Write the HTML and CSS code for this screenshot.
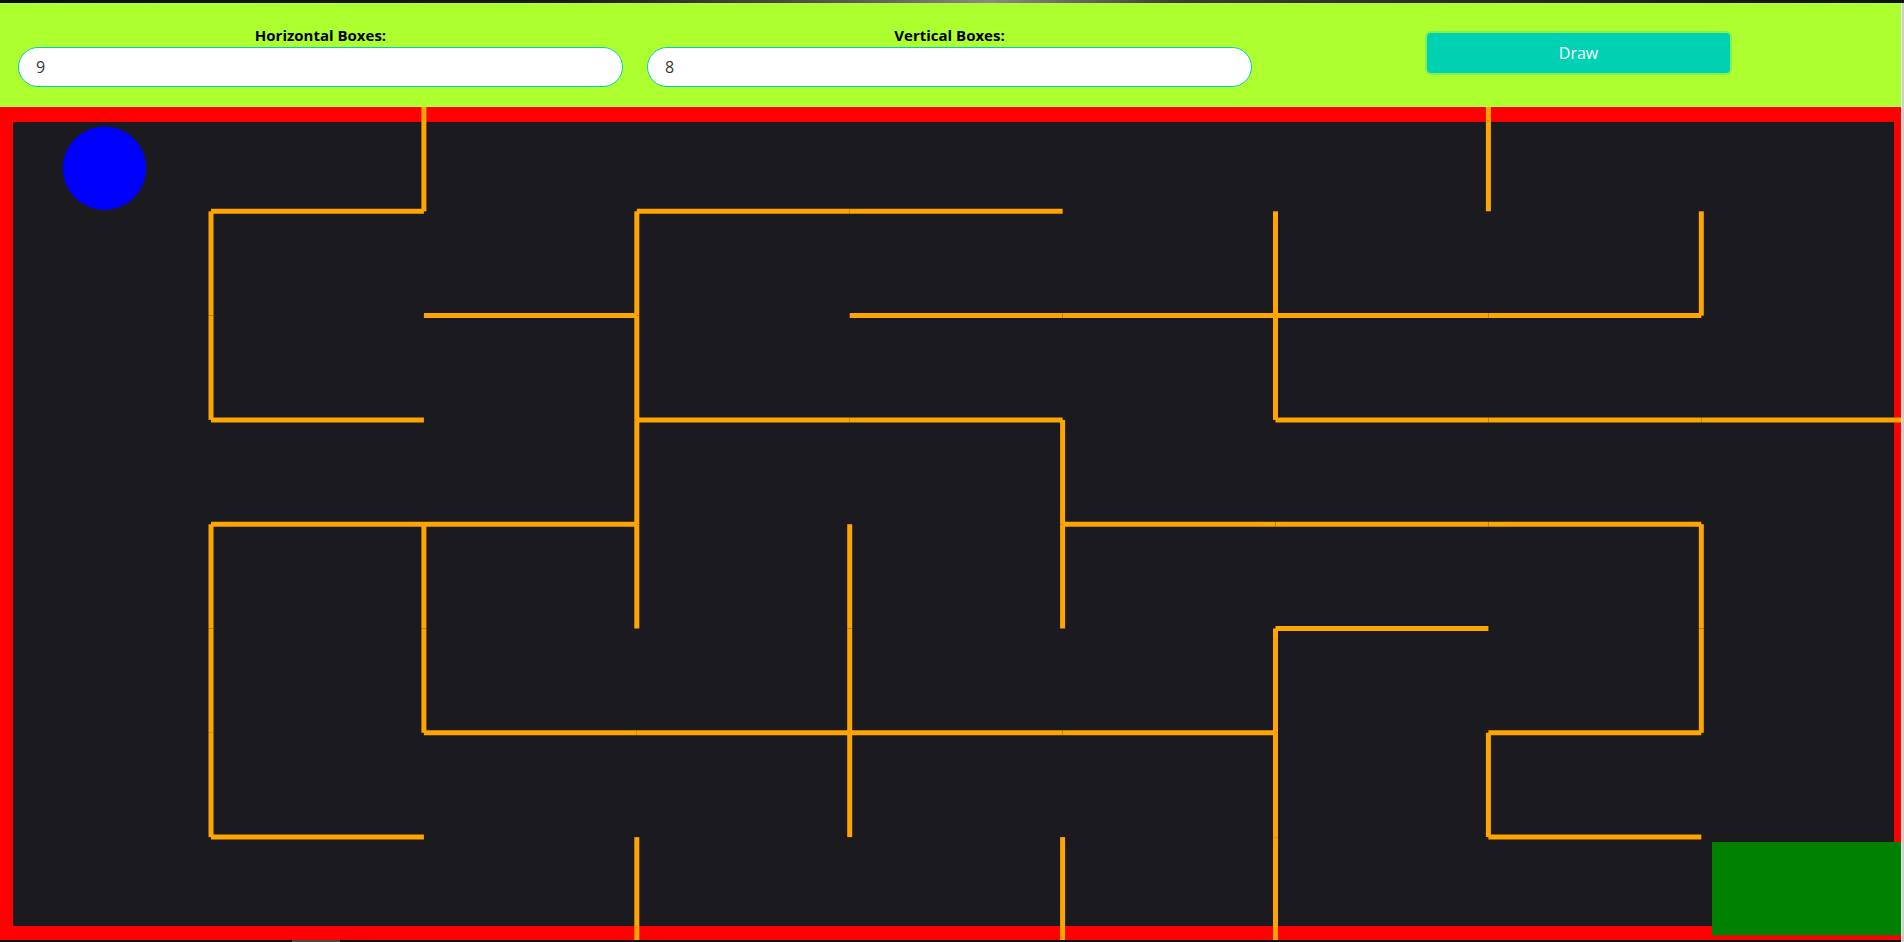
FILE: index.html
```html
<!DOCTYPE html>
<html lang="en">
<head>
<meta charset="utf-8">
<title>Maze</title>
<link rel="stylesheet" href="styles.css">
</head>
<body>
<div class="topstrip"></div>
<div class="frame">
  <div class="page">
    <header class="controls">
      <div class="column">
        <label class="label">Horizontal Boxes:</label>
        <input class="input" type="text" value="9">
      </div>
      <div class="column">
        <label class="label">Vertical Boxes:</label>
        <input class="input" type="text" value="8">
      </div>
      <div class="column column-button">
        <button class="button">Draw</button>
      </div>
    </header>
    <div class="maze-wrap">
      <svg class="maze" width="1901" height="835" viewBox="0 0 1901 835" xmlns="http://www.w3.org/2000/svg">
        <rect class="maze-border" x="0" y="0" width="1901" height="833"/>
        <rect class="maze-floor" x="13" y="15" width="1881" height="804"/>
        <g class="walls">
          <line x1="423.9" y1="0" x2="423.9" y2="104.3"/>
          <line x1="211.0" y1="104.3" x2="211.0" y2="208.6"/>
          <line x1="211.0" y1="208.6" x2="211.0" y2="312.9"/>
          <line x1="636.8" y1="104.3" x2="636.8" y2="208.6"/>
          <line x1="636.8" y1="208.6" x2="636.8" y2="312.9"/>
          <line x1="636.8" y1="312.9" x2="636.8" y2="417.2"/>
          <line x1="636.8" y1="417.2" x2="636.8" y2="521.5"/>
          <line x1="1701.3" y1="104.3" x2="1701.3" y2="208.6"/>
          <line x1="1488.4" y1="0" x2="1488.4" y2="104.3"/>
          <line x1="1275.5" y1="104.3" x2="1275.5" y2="208.6"/>
          <line x1="1275.5" y1="208.6" x2="1275.5" y2="312.9"/>
          <line x1="1062.6" y1="312.9" x2="1062.6" y2="417.2"/>
          <line x1="1062.6" y1="417.2" x2="1062.6" y2="521.5"/>
          <line x1="1701.3" y1="417.2" x2="1701.3" y2="521.5"/>
          <line x1="1701.3" y1="521.5" x2="1701.3" y2="625.8"/>
          <line x1="1488.4" y1="625.8" x2="1488.4" y2="730.1"/>
          <line x1="1275.5" y1="521.5" x2="1275.5" y2="625.8"/>
          <line x1="1275.5" y1="625.8" x2="1275.5" y2="730.1"/>
          <line x1="1275.5" y1="730.1" x2="1275.5" y2="834.4"/>
          <line x1="423.9" y1="417.2" x2="423.9" y2="521.5"/>
          <line x1="423.9" y1="521.5" x2="423.9" y2="625.8"/>
          <line x1="211.0" y1="417.2" x2="211.0" y2="521.5"/>
          <line x1="211.0" y1="521.5" x2="211.0" y2="625.8"/>
          <line x1="211.0" y1="625.8" x2="211.0" y2="730.1"/>
          <line x1="849.7" y1="417.2" x2="849.7" y2="521.5"/>
          <line x1="849.7" y1="521.5" x2="849.7" y2="625.8"/>
          <line x1="849.7" y1="625.8" x2="849.7" y2="730.1"/>
          <line x1="636.8" y1="730.1" x2="636.8" y2="834.4"/>
          <line x1="1062.6" y1="730.1" x2="1062.6" y2="834.4"/>

          <line x1="211.0" y1="104.3" x2="423.9" y2="104.3"/>
          <line x1="211.0" y1="312.9" x2="423.9" y2="312.9"/>
          <line x1="423.9" y1="208.6" x2="636.8" y2="208.6"/>
          <line x1="636.8" y1="104.3" x2="849.7" y2="104.3"/>
          <line x1="849.7" y1="104.3" x2="1062.6" y2="104.3"/>
          <line x1="849.7" y1="208.6" x2="1062.6" y2="208.6"/>
          <line x1="1062.6" y1="208.6" x2="1275.5" y2="208.6"/>
          <line x1="1275.5" y1="208.6" x2="1488.4" y2="208.6"/>
          <line x1="1488.4" y1="208.6" x2="1701.3" y2="208.6"/>
          <line x1="1275.5" y1="312.9" x2="1488.4" y2="312.9"/>
          <line x1="1488.4" y1="312.9" x2="1701.3" y2="312.9"/>
          <line x1="1701.3" y1="312.9" x2="1914.2" y2="312.9"/>
          <line x1="636.8" y1="312.9" x2="849.7" y2="312.9"/>
          <line x1="849.7" y1="312.9" x2="1062.6" y2="312.9"/>
          <line x1="1062.6" y1="417.2" x2="1275.5" y2="417.2"/>
          <line x1="1275.5" y1="417.2" x2="1488.4" y2="417.2"/>
          <line x1="1488.4" y1="417.2" x2="1701.3" y2="417.2"/>
          <line x1="1488.4" y1="625.8" x2="1701.3" y2="625.8"/>
          <line x1="1488.4" y1="730.1" x2="1701.3" y2="730.1"/>
          <line x1="1275.5" y1="521.5" x2="1488.4" y2="521.5"/>
          <line x1="423.9" y1="625.8" x2="636.8" y2="625.8"/>
          <line x1="636.8" y1="625.8" x2="849.7" y2="625.8"/>
          <line x1="849.7" y1="625.8" x2="1062.6" y2="625.8"/>
          <line x1="1062.6" y1="625.8" x2="1275.5" y2="625.8"/>
          <line x1="211.0" y1="417.2" x2="423.9" y2="417.2"/>
          <line x1="423.9" y1="417.2" x2="636.8" y2="417.2"/>
          <line x1="211.0" y1="730.1" x2="423.9" y2="730.1"/>
        </g>
        <circle class="player" cx="104.5" cy="61.3" r="41.7"/>
        <rect class="goal" x="1712" y="735" width="200" height="93.3"/>
      </svg>
      <div class="hscroll"><div class="hthumb"></div></div>
    </div>
  </div>
  <div class="vscroll"></div>
</div>
</body>
</html>
```

FILE: styles.css
```css
html, body {
  margin: 0;
  padding: 0;
  width: 1904px;
  height: 942px;
  overflow: hidden;
  background: #0b0e10;
  font-family: "Open Sans", "Liberation Sans", sans-serif;
}

.topstrip {
  height: 3px;
  background: linear-gradient(to right, #0c0c0c 0%, #1a1a1a 30%, #5a5a5a 45%, #8a8a8a 52%, #3a3a3a 62%, #101010 100%);
}

.frame {
  display: flex;
  height: 939px;
}

.page {
  width: 1901px;
  display: flex;
  flex-direction: column;
}

.vscroll {
  width: 3px;
  background: #cfcfcf;
  border-left: 1px solid #e8e8e8;
  box-sizing: border-box;
}

.controls {
  height: 104px;
  box-sizing: border-box;
  background: #adff2f;
  padding: 20px 20px 0 18px;
  display: flex;
  gap: 24px;
}

.column {
  flex: 1;
  display: flex;
  flex-direction: column;
  align-items: center;
}

.label {
  display: block;
  font-size: 15px;
  font-weight: 700;
  color: #000000;
  line-height: 24px;
  height: 24px;
  margin-bottom: 0;
}

.input {
  width: 100%;
  height: 40px;
  box-sizing: border-box;
  border: 1px solid #00d1b2;
  border-radius: 20px;
  background: #ffffff;
  padding: 0 17px;
  font-family: "Open Sans", "Liberation Sans", sans-serif;
  font-size: 16px;
  color: #363636;
  outline: none;
}

.column-button {
  justify-content: flex-start;
}

.button {
  margin-top: 10px;
  width: 50%;
  height: 40px;
  border: 1px solid transparent;
  border-radius: 4px;
  background: #00d1b2;
  color: #ffffff;
  font-family: "Open Sans", "Liberation Sans", sans-serif;
  font-size: 16px;
  box-shadow: 0 0 0 2px rgba(0, 209, 178, 0.25);
  cursor: pointer;
}

.maze-wrap {
  position: relative;
  height: 835px;
  overflow: hidden;
}

.maze {
  display: block;
}

.maze-border {
  fill: #ff0000;
}

.maze-floor {
  fill: #1b1a1f;
}

.walls line {
  stroke: #ffa500;
  stroke-width: 5;
  stroke-linecap: butt;
}

.player {
  fill: #0000ff;
}

.goal {
  fill: #008000;
}

.hscroll {
  position: absolute;
  left: 0;
  right: 0;
  bottom: 0;
  height: 2px;
  background: #0b0e10;
}

.hthumb {
  margin-left: 292px;
  width: 48px;
  height: 2px;
  background: #474747;
}
```
